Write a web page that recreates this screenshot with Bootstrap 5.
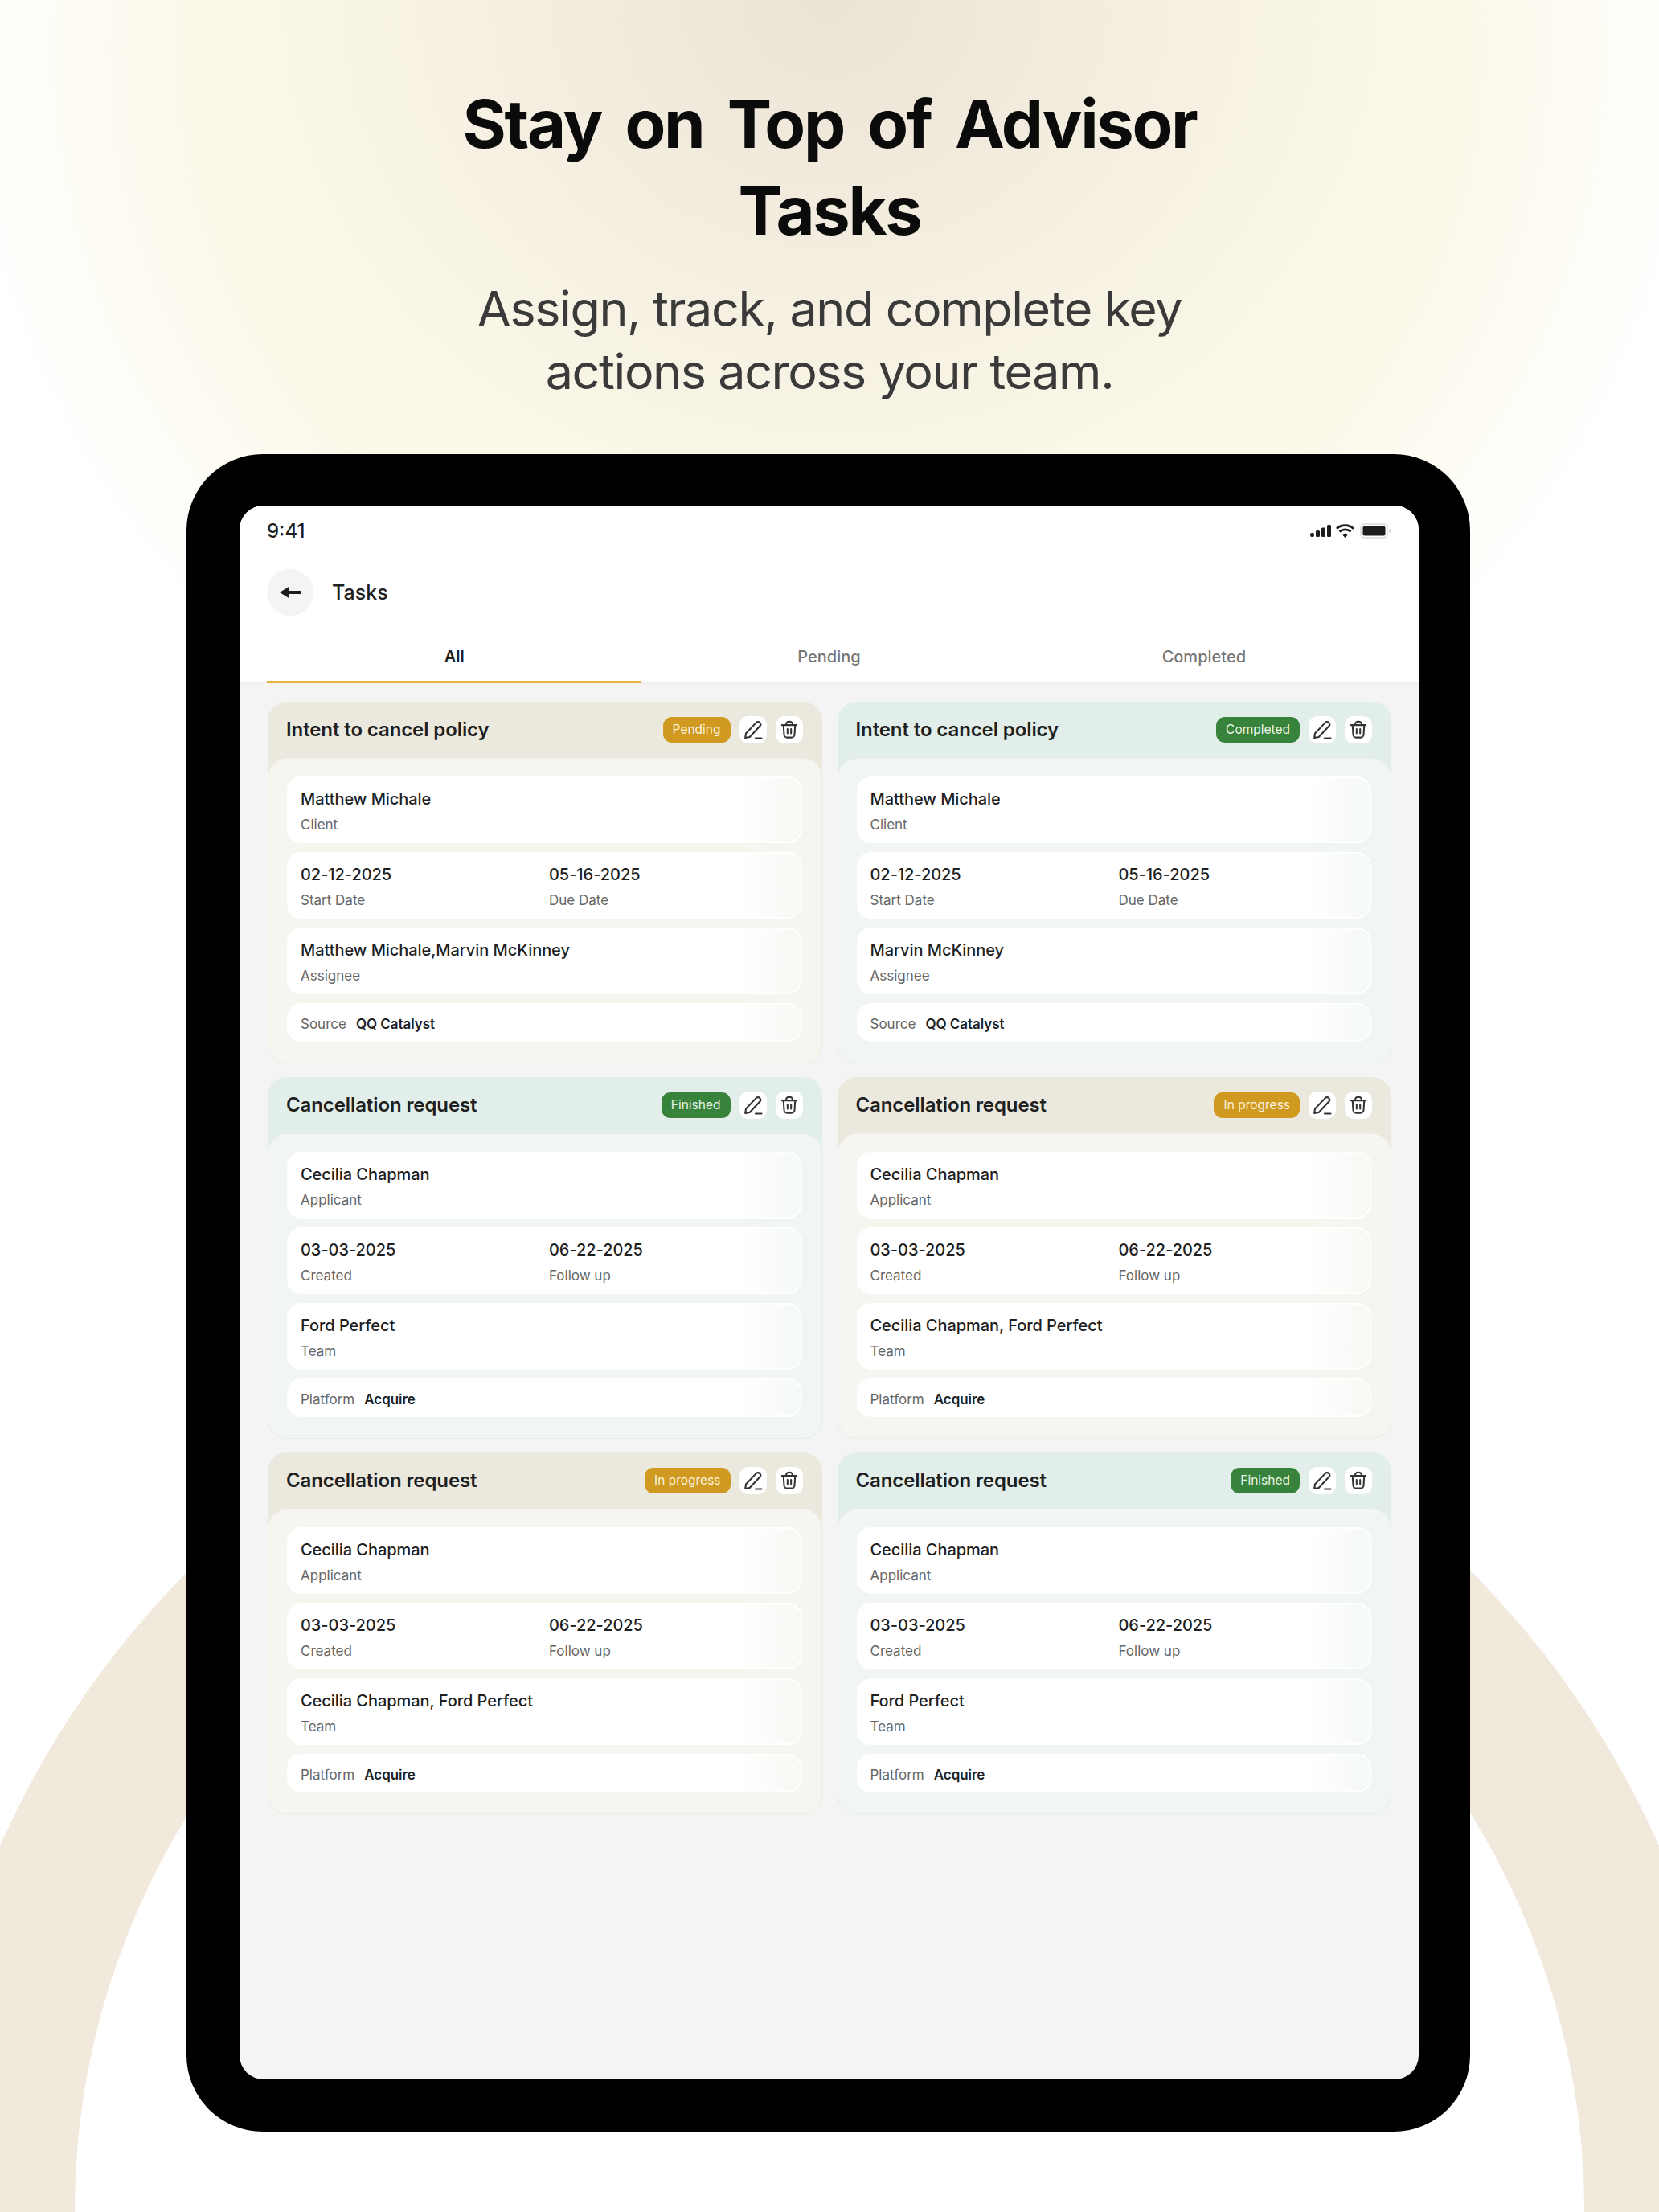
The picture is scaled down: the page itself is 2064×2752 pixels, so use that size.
<!DOCTYPE html>
<html lang="en">
<head>
    <meta charset="UTF-8" />
    <meta name="viewport" content="width=device-width, initial-scale=1.0" />
    <title>Tasks</title>
    <link href="https://cdn.jsdelivr.net/npm/bootstrap@5.3.0/dist/css/bootstrap.min.css" rel="stylesheet" />
    <style>
        body {
            margin: 0;
            background: #fff;
            font-family: Inter, "Liberation Sans", sans-serif;
            color: #1f1f1f;
        }
        .page-wrap {
            width: 2064px;
            height: 2752px;
            padding-top: 100px;
            background:
                radial-gradient(ellipse 720px 640px at 1032px 0, #ebe3d6 0%, rgba(240, 233, 220, .75) 45%, rgba(248, 243, 228, 0) 100%),
                radial-gradient(ellipse 1095px 1040px at 1032px 60px, #fbf8e8 0%, #fbf8e8 70%, rgba(251, 248, 232, 0) 100%),
                #fff;
        }
        .ring {
            position: absolute;
            left: -96px;
            top: 1624px;
            width: 2256px;
            height: 2256px;
            border: 189px solid #f1e9dc;
            border-radius: 50%;
        }
        .hero-title {
            font-size: 83px;
            line-height: 108px;
            font-weight: 700;
            letter-spacing: -2.300px;
            word-spacing: 12px;
            color: #0b0b0b;
            margin: 0 0 29px;
        }
        .hero-sub {
            font-size: 61px;
            line-height: 78px;
            font-weight: 400;
            letter-spacing: -1.400px;
            color: #3a3a3a;
            margin: 0 0 64px;
        }
        .device {
            z-index: 1;
            width: 1597px;
            height: 2087px;
            margin-left: 232px;
            padding: 64px 64px 65px 66px;
            background: #000;
            border-radius: 95px;
        }
        .screen {
            height: 100%;
            background: #f4f4f4;
            border-radius: 30px;
            overflow: hidden;
        }
        .top-area {
            background: #fff;
        }
        .status-bar {
            height: 64px;
            padding: 0 34px;
            font-size: 24px;
            font-weight: 500;
        }
        .title-bar {
            padding: 15px 34px 0;
            gap: 23px;
            font-size: 25px;
            font-weight: 500;
        }
        .title-text {
            padding-top: 2px;
        }
        .back-btn {
            width: 58px;
            height: 58px;
            background: #f4f4f4;
            border-radius: 50%;
        }
        .tab-row {
            padding: 0 34px;
            border-bottom: 2px solid #ececec;
        }
        .tab-link {
            padding: 38px 0 17px;
            margin-bottom: -2px;
            font-size: 20px;
            line-height: 26px;
            font-weight: 500;
            color: #777;
            border-bottom: 3px solid transparent;
        }
        .tab-link.active {
            color: #1f1f1f;
            font-weight: 600;
            border-bottom-color: #e8b23a;
        }
        .task-grid {
            display: grid;
            grid-template-columns: 1fr 1fr;
            gap: 17px 19px;
            padding: 23px 34px 0 35px;
        }
        .task-card {
            height: 450px;
            border: 0;
            border-radius: 24px;
            overflow: hidden;
        }
        .task-card.tone-beige {
            background: #ebe8dd;
        }
        .task-card.tone-green {
            background: #e2eee9;
        }
        .task-head {
            height: 70px;
            gap: 11px;
            padding: 0 24px 0 23px;
            font-size: 24px;
            font-weight: 600;
            letter-spacing: -.1px;
        }
        .task-body {
            flex: 1;
            gap: 11px;
            padding: 22px 24px 23px 23px;
            border: 1px solid rgba(0, 0, 0, .035);
            border-radius: 24px;
        }
        .tone-beige .task-body {
            background: #f6f5f0;
        }
        .tone-green .task-body {
            background: #f1f6f4;
        }
        .info-box {
            height: 83px;
            padding: 13px 15px 9px;
            border: 2px solid #fff;
            border-radius: 18px;
            background-origin: border-box;
        }
        .tone-beige .info-box {
            background-image: linear-gradient(90deg, #fff 88%, #f9f8f5 99%);
        }
        .tone-green .info-box {
            background-image: linear-gradient(90deg, #fff 88%, #f5f9f7 99%);
        }
        .info-box.info-line {
            height: 48px;
            padding: 3px 15px 0;
        }
        .info-val {
            font-size: 20px;
            line-height: 26px;
            font-weight: 500;
            letter-spacing: -.05px;
        }
        .info-label {
            margin-top: 8px;
            font-size: 17px;
            line-height: 22px;
            color: #666;
        }
        .info-line .info-label {
            margin: 0 12px 0 0;
        }
        .info-line .info-val {
            font-size: 17px;
            line-height: 22px;
            font-weight: 600;
        }
        .first-col {
            width: 309px;
        }
        .task-tag {
            height: 32px;
            padding: 0 12px;
            font-size: 15.500px;
            font-weight: 400;
            letter-spacing: 0;
            border-radius: 11px;
            color: #fbf3de;
        }
        .tag-amber {
            background: #d0991f;
        }
        .tag-green {
            background: #38833b;
            color: #eaf5ea;
        }
        .icon-btn {
            width: 34px;
            height: 34px;
            background: #fff;
            border-radius: 11px;
        }
    </style>
</head>
<body>
<svg width="0" height="0" class="position-absolute">
    <symbol id="ico-edit" viewBox="0 0 24 24">
        <path d="M3.600 20.600l.7-4.800L15.200 4.400a2.600 2.600 0 0 1 3.900 0 2.700 2.700 0 0 1 0 3.800L8.300 19.700z" fill="none" stroke="#333" stroke-width="1.800" stroke-linejoin="round" />
        <path d="M14.500 21h6.500" fill="none" stroke="#333" stroke-width="1.800" stroke-linecap="round" />
    </symbol>
    <symbol id="ico-trash" viewBox="0 0 24 24">
        <path d="M3.500 6.600h17M8.300 6.300C8.300 3.900 9.600 2.600 12 2.600s3.700 1.300 3.700 3.700M5.300 6.800l.7 10.700a3.500 3.500 0 0 0 3.500 3.400h5a3.500 3.500 0 0 0 3.500-3.400l.7-10.700M10 11v5.200M14 11v5.200" fill="none" stroke="#333" stroke-width="1.900" stroke-linecap="round" />
    </symbol>
</svg>

<div class="page-wrap position-relative overflow-hidden">
    <div class="ring"></div>
    <div class="position-relative text-center">
        <h1 class="hero-title">Stay on Top of Advisor<br />Tasks</h1>
        <p class="hero-sub">Assign, track, and complete key<br />actions across your team.</p>
    </div>
    <div class="device position-relative">
        <div class="screen d-flex flex-column">
            <div class="top-area">
                <div class="status-bar d-flex align-items-center justify-content-between">
                    <span>9:41</span>
                    <svg width="101" height="20" viewBox="0 0 101 20">
                        <rect x="0" y="12" width="5" height="5" rx="2" fill="#1c1c1c" />
                        <rect x="7" y="9" width="5" height="8" rx="1.500" fill="#1c1c1c" />
                        <rect x="14" y="5.500" width="5" height="11.500" rx="1.500" fill="#1c1c1c" />
                        <rect x="21" y="2" width="5" height="15" rx="1.500" fill="#1c1c1c" />
                        <path d="M33 6.800a15.500 15.500 0 0 1 21 0M36.500 10.500a10.500 10.500 0 0 1 14 0" fill="none" stroke="#1c1c1c" stroke-width="2.800" />
                        <path d="M40 14.300a5 5 0 0 1 7 0l-3.500 3.700z" fill="#1c1c1c" />
                        <rect x="63" y="1" width="33" height="17" rx="4.500" fill="#fff" stroke="#d9d9d9" stroke-width="1.500" />
                        <rect x="65.500" y="3.500" width="28" height="12" rx="2.500" fill="#1c1c1c" />
                        <rect x="98" y="7" width="2" height="5" rx="1" fill="#d9d9d9" />
                    </svg>
                </div>
                <div class="title-bar d-flex align-items-center">
                    <span class="back-btn d-flex align-items-center justify-content-center">
                        <svg width="27" height="16" viewBox="0 0 27 16"><path d="M0 8L12 .5V6h15v4H12v5.500z" fill="#1c1c1c" /></svg>
                    </span>
                    <span class="title-text">Tasks</span>
                </div>
                <ul class="tab-row nav nav-justified">
                    <li class="nav-item"><a class="tab-link active d-block text-decoration-none" href="#">All</a></li>
                    <li class="nav-item"><a class="tab-link d-block text-decoration-none" href="#">Pending</a></li>
                    <li class="nav-item"><a class="tab-link d-block text-decoration-none" href="#">Completed</a></li>
                </ul>
            </div>
            <div class="task-grid" id="taskGrid"></div>
        </div>
    </div>
</div>

<script>
    var tasks = [
        { title: "Intent to cancel policy", tone: "beige", tag: "Pending", name: "Matthew Michale", role: "Client", d1: "02-12-2025", l1: "Start Date", d2: "05-16-2025", l2: "Due Date", who: "Matthew Michale,Marvin McKinney", whoLabel: "Assignee", srcLabel: "Source", src: "QQ Catalyst" },
        { title: "Intent to cancel policy", tone: "green", tag: "Completed", name: "Matthew Michale", role: "Client", d1: "02-12-2025", l1: "Start Date", d2: "05-16-2025", l2: "Due Date", who: "Marvin McKinney", whoLabel: "Assignee", srcLabel: "Source", src: "QQ Catalyst" },
        { title: "Cancellation request", tone: "green", tag: "Finished", name: "Cecilia Chapman", role: "Applicant", d1: "03-03-2025", l1: "Created", d2: "06-22-2025", l2: "Follow up", who: "Ford Perfect", whoLabel: "Team", srcLabel: "Platform", src: "Acquire" },
        { title: "Cancellation request", tone: "beige", tag: "In progress", name: "Cecilia Chapman", role: "Applicant", d1: "03-03-2025", l1: "Created", d2: "06-22-2025", l2: "Follow up", who: "Cecilia Chapman, Ford Perfect", whoLabel: "Team", srcLabel: "Platform", src: "Acquire" },
        { title: "Cancellation request", tone: "beige", tag: "In progress", name: "Cecilia Chapman", role: "Applicant", d1: "03-03-2025", l1: "Created", d2: "06-22-2025", l2: "Follow up", who: "Cecilia Chapman, Ford Perfect", whoLabel: "Team", srcLabel: "Platform", src: "Acquire" },
        { title: "Cancellation request", tone: "green", tag: "Finished", name: "Cecilia Chapman", role: "Applicant", d1: "03-03-2025", l1: "Created", d2: "06-22-2025", l2: "Follow up", who: "Ford Perfect", whoLabel: "Team", srcLabel: "Platform", src: "Acquire" }
    ];

    var grid = document.getElementById("taskGrid");
    tasks.forEach((t) => {
        let tagClass = t.tone === "green" ? "tag-green" : "tag-amber";
        grid.innerHTML += `
        <div class="card task-card tone-${t.tone}">
            <div class="task-head d-flex align-items-center">
                <span class="me-auto">${t.title}</span>
                <span class="badge task-tag ${tagClass} d-flex align-items-center">${t.tag}</span>
                <span class="icon-btn d-flex align-items-center justify-content-center"><svg width="28" height="28"><use href="#ico-edit" /></svg></span>
                <span class="icon-btn d-flex align-items-center justify-content-center"><svg width="26" height="26"><use href="#ico-trash" /></svg></span>
            </div>
            <div class="task-body d-flex flex-column">
                <div class="info-box">
                    <div class="info-val">${t.name}</div>
                    <div class="info-label">${t.role}</div>
                </div>
                <div class="info-box d-flex">
                    <div class="first-col">
                        <div class="info-val">${t.d1}</div>
                        <div class="info-label">${t.l1}</div>
                    </div>
                    <div>
                        <div class="info-val">${t.d2}</div>
                        <div class="info-label">${t.l2}</div>
                    </div>
                </div>
                <div class="info-box">
                    <div class="info-val">${t.who}</div>
                    <div class="info-label">${t.whoLabel}</div>
                </div>
                <div class="info-box info-line d-flex align-items-center">
                    <span class="info-label">${t.srcLabel}</span>
                    <span class="info-val">${t.src}</span>
                </div>
            </div>
        </div>`;
    });
</script>

<script src="https://cdn.jsdelivr.net/npm/bootstrap@5.3.0/dist/js/bootstrap.bundle.min.js"></script>
</body>
</html>
